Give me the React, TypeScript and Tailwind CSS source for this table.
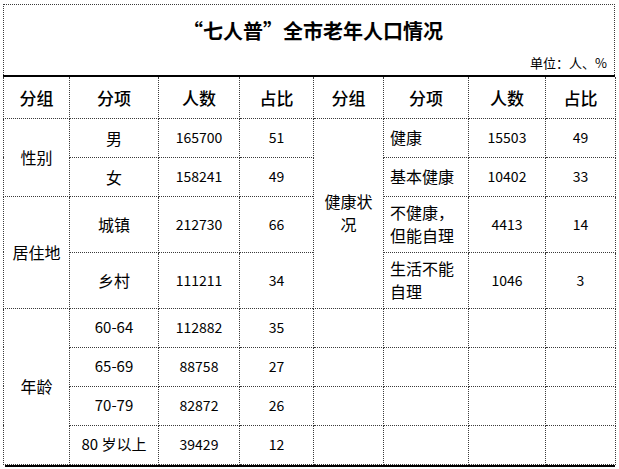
const font = { fontFamily: '"Noto Sans CJK SC", "Noto Sans", sans-serif' };

type Row = { item: React.ReactNode; count: string; pct: string };

const left: { group: string; rows: Row[] }[] = [
  {
    group: '性别',
    rows: [
      { item: '男', count: '165700', pct: '51' },
      { item: '女', count: '158241', pct: '49' },
    ],
  },
  {
    group: '居住地',
    rows: [
      { item: '城镇', count: '212730', pct: '66' },
      { item: '乡村', count: '111211', pct: '34' },
    ],
  },
  {
    group: '年龄',
    rows: [
      { item: '60-64', count: '112882', pct: '35' },
      { item: '65-69', count: '88758', pct: '27' },
      { item: '70-79', count: '82872', pct: '26' },
      { item: '80 岁以上', count: '39429', pct: '12' },
    ],
  },
];

const health: Row[] = [
  { item: '健康', count: '15503', pct: '49' },
  { item: '基本健康', count: '10402', pct: '33' },
  {
    item: (
      <>
        不健康，
        <br />
        但能自理
      </>
    ),
    count: '4413',
    pct: '14',
  },
  {
    item: (
      <>
        生活不能
        <br />
        自理
      </>
    ),
    count: '1046',
    pct: '3',
  },
];

const heights = ['h-[39px]', 'h-[39px]', 'h-[56px]', 'h-[56px]', 'h-[39px]', 'h-[39px]', 'h-[39px]', 'h-[39px]'];

const cell = 'border border-dotted border-[#3a3a3a] p-0 text-center align-middle';
const th = 'border-x border-b border-dotted border-[#3a3a3a] p-0 text-center align-middle text-[17px] font-medium';

export default function App() {
  const flat = left.flatMap((g) => g.rows.map((r, i) => ({ ...r, group: g.group, first: i === 0, span: g.rows.length })));

  return (
    <div className="min-h-[469px] bg-white pl-[3px] pt-[4px] text-black" style={font}>
      <div className="w-[612px]">
        <div className="flex h-[71px] flex-col border-x border-t border-dotted border-[#3a3a3a]">
          <div className="pl-[8px] pt-[12px] text-center text-[20px] font-bold leading-[27px]">“七人普”全市老年人口情况</div>
          <div className="mt-auto pb-[3px] pr-[7px] text-right text-[13px] leading-[18px]">单位：人、%</div>
        </div>
        <div className="h-[2px] bg-black" />
        <table className="w-[612px] table-fixed border-collapse text-[16px]">
          <colgroup>
            <col className="w-[66px]" />
            <col className="w-[89px]" />
            <col className="w-[81px]" />
            <col className="w-[74px]" />
            <col className="w-[70px]" />
            <col className="w-[85px]" />
            <col className="w-[77px]" />
            <col className="w-[70px]" />
          </colgroup>
          <thead>
            <tr className="h-[41px]">
              {['分组', '分项', '人数', '占比', '分组', '分项', '人数', '占比'].map((h, i) => (
                <th key={i} className={th}>
                  {h}
                </th>
              ))}
            </tr>
          </thead>
          <tbody>
            {flat.map((r, i) => (
              <tr key={i} className={heights[i]}>
                {r.first && (
                  <td rowSpan={r.span} className={cell}>
                    {r.group}
                  </td>
                )}
                <td className={i >= 4 ? `${cell} text-[15px]` : cell}>{r.item}</td>
                <td className={`${cell} text-[14px]`}>{r.count}</td>
                <td className={`${cell} text-[14px]`}>{r.pct}</td>
                {i === 0 && (
                  <td rowSpan={4} className={`${cell} leading-[23px]`}>
                    健康状
                    <br />
                    况
                  </td>
                )}
                {i < 4 ? (
                  <>
                    <td className={`${cell} pl-[6px] text-left leading-[23px]`}>{health[i].item}</td>
                    <td className={`${cell} text-[14px]`}>{health[i].count}</td>
                    <td className={`${cell} text-[14px]`}>{health[i].pct}</td>
                  </>
                ) : (
                  <>
                    <td className={cell} />
                    <td className={cell} />
                    <td className={cell} />
                    <td className={cell} />
                  </>
                )}
              </tr>
            ))}
          </tbody>
        </table>
        <div className="ml-[2px] h-[2px] w-[610px] bg-black" />
      </div>
    </div>
  );
}
